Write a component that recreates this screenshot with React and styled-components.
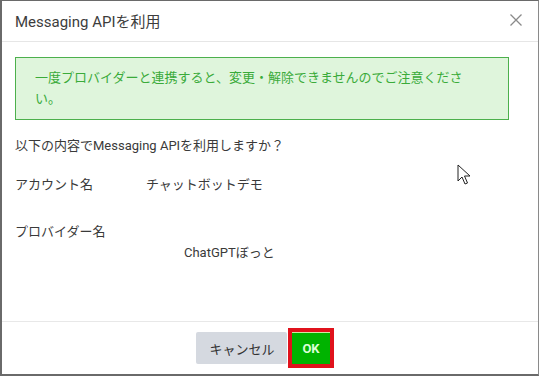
import React from "react";
import styled, { createGlobalStyle } from "styled-components";

const Global = createGlobalStyle`
  html, body, #root { margin: 0; padding: 0; height: 100%; }
  body { background: #fff; font-family: Roboto, "Noto Sans CJK JP", sans-serif; }
  * { box-sizing: border-box; }
`;

const Dialog = styled.div`
  position: relative;
  width: 539px;
  height: 376px;
  display: flex;
  flex-direction: column;
  background: #fff;
  border-top: 1px solid #6a6a6a;
  border-left: 2px solid #6a6a6a;
  border-bottom: 2px solid #6a6a6a;
  border-right: 1px solid #8a8a8a;
  color: #3a3a3a;
`;

const Header = styled.div`
  height: 41px;
  flex: none;
  display: flex;
  align-items: center;
  justify-content: space-between;
  padding: 0 15px 2px 13px;
  border-bottom: 1px solid #e6e6e6;
`;

const Title = styled.h1`
  margin: 0;
  font-size: 15px;
  font-weight: 400;
  color: #3c3c3c;
`;

const Close = styled.button`
  border: 0;
  background: none;
  padding: 0;
  width: 14px;
  height: 14px;
  display: flex;
  cursor: pointer;
`;

const Body = styled.div`
  flex: 1;
  padding: 15px 29px 0 13px;
  font-size: 13px;
  line-height: 21px;
`;

const Alert = styled.div`
  border: 1px solid #4cb04c;
  background: #dff5dc;
  color: #3aab3a;
  padding: 9px 28px 10px 19px;
  font-size: 13px;
  line-height: 21px;
  margin-bottom: 15px;
`;

const Question = styled.p`
  margin: 0;
  color: #3a3a3a;
`;

const Row = styled.div`
  display: flex;
  flex-wrap: wrap;
  margin-top: ${(p) => p.$gap}px;
`;

const Label = styled.div`
  width: 131px;
  color: #3a3a3a;
`;

const Value = styled.div`
  color: #3a3a3a;
  ${(p) => (p.$wrapped ? "flex-basis: 100%; padding-left: 169px;" : "")}
`;

const Footer = styled.div`
  flex: none;
  height: 53px;
  border-top: 1px solid #e8e8e8;
  display: flex;
  justify-content: center;
  align-items: flex-start;
  gap: 4px;
  padding: 10px 14px 0 0;
`;

const Button = styled.button`
  height: 32px;
  border: 0;
  border-radius: ${(p) => (p.$primary ? 0 : 2)}px;
  font-family: Roboto, "Noto Sans CJK JP", sans-serif;
  font-size: 13px;
  padding: 0 ${(p) => (p.$primary ? 10 : 13)}px;
  background: ${(p) => (p.$primary ? "#00b300" : "#d5d9e0")};
  color: ${(p) => (p.$primary ? "#dcffd8" : "#333")};
  font-weight: ${(p) => (p.$primary ? 700 : 400)};
  box-shadow: ${(p) => (p.$primary ? "inset 0 1px 0 #cfe8a0, 0 0 0 4px #e0121c" : "none")};
  margin-left: ${(p) => (p.$primary ? 1 : 0)}px;
  cursor: pointer;
`;

const Pointer = styled.svg`
  position: absolute;
  left: 455px;
  top: 163px;
`;

export default function App() {
  return (
    <>
      <Global />
      <Dialog>
        <Header>
          <Title>Messaging APIを利用</Title>
          <Close aria-label="close">
            <svg width="14" height="14" viewBox="0 0 14 14">
              <path d="M1.5 1.5 L12.5 12.5 M12.5 1.5 L1.5 12.5" stroke="#8a8a8a" strokeWidth="1.3" fill="none" />
            </svg>
          </Close>
        </Header>
        <Body>
          <Alert>一度プロバイダーと連携すると、変更・解除できませんのでご注意ください。</Alert>
          <Question>以下の内容でMessaging APIを利用しますか？</Question>
          <Row $gap={18}>
            <Label>アカウント名</Label>
            <Value>チャットボットデモ</Value>
          </Row>
          <Row $gap={26}>
            <Label>プロバイダー名</Label>
            <Value $wrapped>ChatGPTぼっと</Value>
          </Row>
        </Body>
        <Footer>
          <Button>キャンセル</Button>
          <Button $primary>OK</Button>
        </Footer>
        <Pointer width="14" height="22" viewBox="0 0 14 22">
          <path d="M1 1 L1 17 L5 13 L8 20 L10.5 19 L7.5 12 L13 12 Z" fill="#fff" stroke="#222" strokeWidth="1" strokeLinejoin="round" />
        </Pointer>
      </Dialog>
    </>
  );
}
